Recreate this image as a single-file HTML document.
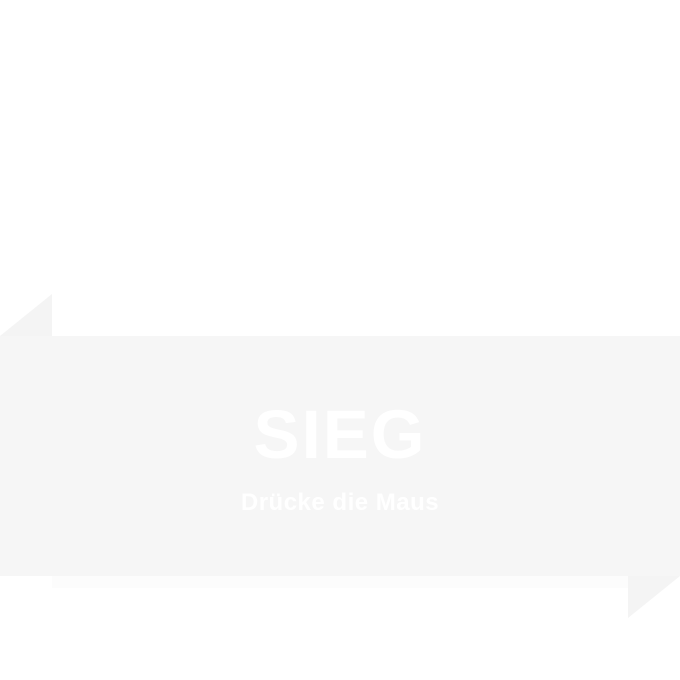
<!DOCTYPE html>
<html><head><style>
body{margin:0;width:680px;height:680px;background:#fff;position:relative;overflow:hidden;font-family:"Liberation Sans",sans-serif}
.band{position:absolute;left:0;top:336px;width:680px;height:240px;background:#f6f6f6}
.t{position:absolute;left:0;width:680px;text-align:center;color:#fff;font-weight:bold}
</style></head><body>
<svg width="680" height="680" style="position:absolute;left:0;top:0">
<polygon points="0,336 52,294 52,336" fill="#f4f4f4"/>
<polygon points="628,576 680,576 628,618" fill="#f4f4f4"/>
<rect x="52" y="576" width="576" height="12" fill="#fcfcfc"/>
</svg>
<div class="band"></div>
<div class="t" style="top:397px;font-size:69px;line-height:76px;letter-spacing:2px">SIEG</div>
<div class="t" style="top:489px;font-size:24px;line-height:28px;letter-spacing:0.5px">Drücke die Maus</div>
</body></html>
